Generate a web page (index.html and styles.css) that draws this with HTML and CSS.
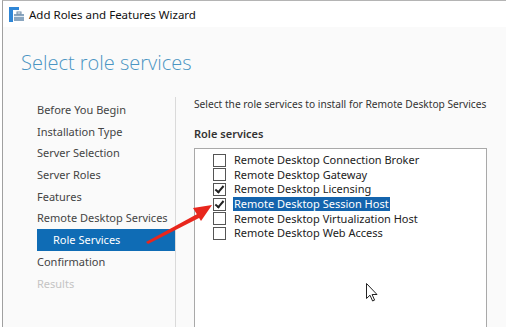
FILE: index.html
```html
<!DOCTYPE html>
<html lang="en">
<head>
    <meta charset="UTF-8">
    <title>Add Roles and Features Wizard</title>
    <link rel="stylesheet" href="styles.css">
</head>
<body>

    <div class="window">
        <!-- Title bar -->
        <div class="titlebar">
            <svg class="app-icon" width="15" height="15" viewBox="0 0 15 15">
                <rect x="0" y="0" width="4" height="15" fill="#2f86d6"/>
                <rect x="0" y="0" width="10" height="3" fill="#2f86d6"/>
                <rect x="5" y="7" width="10" height="7" fill="#8aa6c0"/>
                <rect x="8" y="5" width="4" height="2" fill="none" stroke="#6f8aa5" stroke-width="1"/>
                <rect x="5" y="9" width="10" height="1" fill="#dfe8f0"/>
            </svg>
            <span class="title">Add Roles and Features Wizard</span>
        </div>

        <div class="content">
            <h1>Select role services</h1>

            <div class="wizard">
                <!-- Steps -->
                <ul class="steps">
                    <li>Before You Begin</li>
                    <li>Installation Type</li>
                    <li>Server Selection</li>
                    <li>Server Roles</li>
                    <li>Features</li>
                    <li>Remote Desktop Services</li>
                    <li class="sub active">Role Services</li>
                    <li>Confirmation</li>
                    <li class="disabled">Results</li>
                </ul>

                <!-- Main panel -->
                <div class="panel">
                    <p class="intro">Select the role services to install for Remote Desktop Services</p>
                    <p class="label">Role services</p>

                    <div class="listbox">
                        <div class="item"><span class="check"></span><span class="text">Remote Desktop Connection Broker</span></div>
                        <div class="item"><span class="check"></span><span class="text">Remote Desktop Gateway</span></div>
                        <div class="item"><span class="check checked"></span><span class="text">Remote Desktop Licensing</span></div>
                        <div class="item"><span class="check checked"></span><span class="text selected">Remote Desktop Session Host</span></div>
                        <div class="item"><span class="check"></span><span class="text">Remote Desktop Virtualization Host</span></div>
                        <div class="item"><span class="check"></span><span class="text">Remote Desktop Web Access</span></div>
                    </div>
                </div>
            </div>
        </div>

        <!-- Annotation arrow -->
        <svg class="annotation" width="80" height="50" viewBox="0 0 80 50">
            <polygon points="2,46 55,17 57,21 4,48" fill="#e8261c"/>
            <polygon points="68,9 49,12 57,25" fill="#e8261c"/>
        </svg>

        <!-- Mouse pointer -->
        <svg class="cursor" width="13" height="19" viewBox="0 0 13 19">
            <path d="M0.5 0.5 L0.5 15.5 L4 12.2 L6.6 18 L8.6 17.1 L6.1 11.5 L11 11.5 Z" fill="#fff" stroke="#222" stroke-width="1" stroke-linejoin="miter"/>
        </svg>
    </div>

</body>
</html>
```

FILE: styles.css
```css
body {
    margin: 0;
    background-color: #fff;
    font-family: "Noto Sans", "Open Sans", sans-serif;
    overflow: hidden;
}

.window {
    position: relative;
    margin-left: 2px;
    height: 326px;
    overflow: hidden;
    border-left: 1px solid #a0a0a0;
    border-top: 1px solid #b4b4b4;
    background-color: #fafafa;
}

.titlebar {
    display: flex;
    align-items: center;
    height: 26px;
    padding-left: 6px;
    background-color: #fff;
}

.app-icon {
    margin-right: 5px;
}

.title {
    font-size: 11.5px;
    color: #111;
}

h1 {
    margin: 0;
    padding: 22px 0 0 18px;
    height: 52px;
    box-sizing: border-box;
    font-family: "Open Sans", sans-serif;
    font-weight: 300;
    font-size: 20px;
    color: #4a95c3;
}

.wizard {
    display: flex;
}

.steps {
    list-style: none;
    margin: 18px 0 0;
    padding: 2px 0 40px 34px;
    width: 138px;
    flex-shrink: 0;
    border-right: 1px solid #dadada;
}

.steps li {
    height: 21.7px;
    line-height: 21.7px;
    font-size: 11px;
    color: #444;
    white-space: nowrap;
}

.steps li.sub {
    padding-left: 16px;
}

.steps li.active {
    background-color: #0f6cb5;
    color: #fff;
}

.steps li.disabled {
    color: #c4c4c4;
}

.panel {
    flex: 1;
    padding: 18px 0 0 18px;
}

.intro {
    margin: 0;
    height: 14px;
    line-height: 14px;
    font-size: 10.2px;
    color: #333;
    white-space: nowrap;
}

.label {
    margin: 15px 0 0;
    height: 15px;
    line-height: 15px;
    font-size: 11px;
    font-weight: 600;
    color: #333;
}

.listbox {
    margin-top: 7px;
    width: 291px;
    height: 200px;
    padding-top: 4px;
    border: 1px solid #a9a9a9;
    background-color: #fff;
}

.item {
    display: flex;
    align-items: center;
    height: 14.6px;
    padding-left: 18px;
}

.check {
    position: relative;
    width: 11px;
    height: 11px;
    margin-right: 7px;
    border: 1px solid #555;
    background-color: #fff;
}

.check.checked::after {
    content: "";
    position: absolute;
    left: 3px;
    top: 0;
    width: 3px;
    height: 7px;
    border: solid #222;
    border-width: 0 2px 2px 0;
    transform: rotate(40deg);
}

.text {
    font-size: 11px;
    color: #222;
    line-height: 14px;
    padding: 0 1px;
    white-space: nowrap;
}

.text.selected {
    background-color: #1464ad;
    color: #fff;
}

.annotation {
    position: absolute;
    left: 141px;
    top: 195px;
}

.cursor {
    position: absolute;
    left: 363px;
    top: 282px;
}
```
